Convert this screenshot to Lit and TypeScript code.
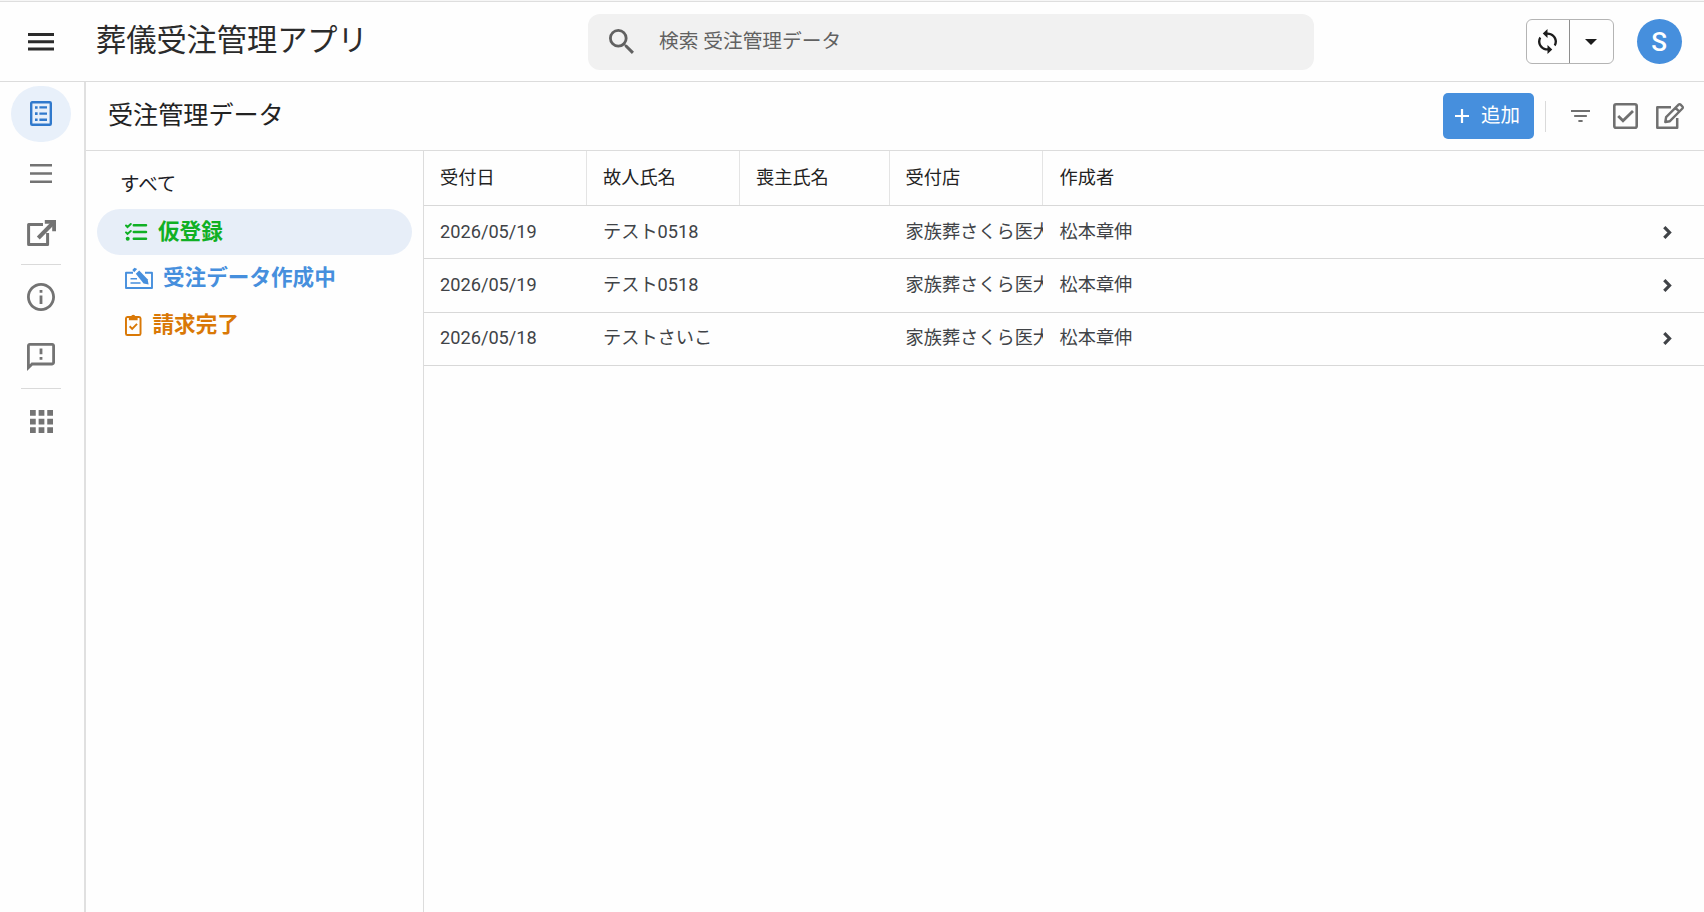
import { LitElement, html, svg, css } from "lit";
import { customElement, property } from "lit/decorators.js";

const icons: Record<string, { vb: string; body: unknown }> = {
  menu: { vb: "0 0 26 18", body: svg`<path d="M0 0h26v3H0zM0 7.2h26v3H0zM0 14.4h26v3H0z"/>` },
  lines: { vb: "0 0 22 19", body: svg`<path d="M0 0h22v2.6H0zM0 8.2h22v2.6H0zM0 16.4h22V19H0z"/>` },
  search: { vb: "3 3 17.5 17.5", body: svg`<path d="M15.5 14h-.79l-.28-.27A6.47 6.47 0 0 0 16 9.5 6.5 6.5 0 1 0 9.5 16c1.61 0 3.09-.59 4.23-1.57l.27.28v.79l5 4.99L20.49 19l-4.99-5zm-6 0C7.01 14 5 11.99 5 9.5S7.01 5 9.5 5 14 7.01 14 9.5 11.99 14 9.5 14z"/>` },
  sync: { vb: "4 1 16 22", body: svg`<path d="M12 4V1L8 5l4 4V6c3.31 0 6 2.69 6 6 0 1.01-.25 1.97-.7 2.8l1.46 1.46A7.93 7.93 0 0 0 20 12c0-4.42-3.58-8-8-8zm0 14c-3.31 0-6-2.69-6-6 0-1.01.25-1.97.7-2.8L5.24 7.74A7.93 7.93 0 0 0 4 12c0 4.42 3.58 8 8 8v3l4-4-4-4v3z"/>` },
  caret: { vb: "0 0 12 6", body: svg`<path d="M0 0h12L6 6z"/>` },
  table: { vb: "0 0 22 25", body: svg`<path fill="none" stroke="currentColor" stroke-width="2.4" d="M2.2 1.2h17.6a1 1 0 0 1 1 1v20.6a1 1 0 0 1-1 1H2.2a1 1 0 0 1-1-1V2.200a1 1 0 0 1 1-1z"/><path d="M5 5.200h2.600v2.600H5zM9.400 5.200H17v2.400H9.400zM5 11.300h2.600v2.600H5zM9.400 11.400H17v2.400H9.400zM5 17.400h2.600V20H5zM9.400 17.500H17v2.400H9.400z"/>` },
  open: { vb: "0 0 29 26", body: svg`<path fill="none" stroke="currentColor" stroke-width="3" stroke-linejoin="round" d="M16 4.400H1.600v20h19V13"/><path fill="none" stroke="currentColor" stroke-width="4" d="M11.300 18 25.500 3.500"/><path d="M17.800 0H29v11.300h-3.800V3.800h-7.400z"/>` },
  info: { vb: "2 2 20 20", body: svg`<path d="M11 7h2v2h-2zm0 4h2v6h-2zm1-9C6.480 2 2 6.480 2 12s4.480 10 10 10 10-4.480 10-10S17.520 2 12 2zm0 18c-4.410 0-8-3.590-8-8s3.590-8 8-8 8 3.590 8 8-3.590 8-8 8z"/>` },
  feedback: { vb: "2 2 20 20", body: svg`<path d="M20 2H4c-1.100 0-1.990.9-1.990 2L2 22l4-4h14c1.100 0 2-.9 2-2V4c0-1.100-.9-2-2-2zm0 14H5.170l-.59.59-.58.58V4h16v12zm-9-4h2v2h-2zm0-6h2v4h-2z"/>` },
  apps: { vb: "4 4 16 16", body: svg`<path d="M4 8h4V4H4zm6 12h4v-4h-4zm-6 0h4v-4H4zm0-6h4v-4H4zm6 0h4v-4h-4zm6-10v4h4V4zm-6 4h4V4h-4zm6 6h4v-4h-4zm0 6h4v-4h-4z"/>` },
  tasks: { vb: "0 0 22 18", body: svg`<path fill="none" stroke="currentColor" stroke-width="2" stroke-linecap="round" d="M1 2.500 2.500 4 5.800 1M1 9.400l1.500 1.500L5.800 8"/><circle cx="2.700" cy="15.800" r="2"/><path fill="none" stroke="currentColor" stroke-width="2.500" stroke-linecap="round" d="M8.800 2.200H21M8.800 9H21M8.800 15.800H21"/>` },
  compose: { vb: "0 0 28 21", body: svg`<path fill="none" stroke="currentColor" stroke-width="1.900" stroke-linejoin="round" d="M8 4.800H1v15.200h26V4.800h-7"/><path fill="none" stroke="currentColor" stroke-width="1.500" d="M5.500 10.800h6.500M5.500 15h10"/><path d="M10.800 5.800 14.200 2.600 22.600 11.200l1 5.200-5-.8z"/><path d="m7.300 1.900 2.200-2.100 2.700 1.300L9.200 4.200z"/>` },
  clipboard: { vb: "0 0 17 22", body: svg`<rect x="1" y="3" width="15" height="18" rx="1.500" fill="none" stroke="currentColor" stroke-width="2"/><path d="M4 6.200V2.500h2.200a2.400 2.400 0 0 1 4.600 0H13v3.700z"/><path fill="none" stroke="currentColor" stroke-width="2" d="m4.800 12.300 2.600 2.600 5-5"/>` },
  plus: { vb: "0 0 14 14", body: svg`<path d="M5.900 0h2.200v5.900H14v2.200H8.100V14H5.900V8.100H0V5.900h5.900z"/>` },
  filter: { vb: "3 6 18 12", body: svg`<path d="M10 18h4v-2h-4v2zM3 6v2h18V6H3zm3 7h12v-2H6v2z"/>` },
  check: { vb: "0 0 25 26", body: svg`<rect x="1.300" y="1.300" width="22.400" height="23.400" rx="1.800" fill="none" stroke="currentColor" stroke-width="2.600"/><path fill="none" stroke="currentColor" stroke-width="2.800" d="m5.200 13 4.800 4.800L20 8"/>` },
  edit: { vb: "0 0 28 26", body: svg`<path fill="none" stroke="currentColor" stroke-width="2.500" stroke-linejoin="round" d="M15 4.200H1.300v20.500h19.900V15"/><path fill="none" stroke="currentColor" stroke-width="2.400" stroke-linejoin="round" d="m9.300 19 .8-4.800L22.600 1.700a1.400 1.400 0 0 1 2 0l1.800 1.800a1.400 1.400 0 0 1 0 2L13.900 18.200z M19.500 4.800l3.800 3.800"/>` },
  chevron: { vb: "0 0 9 13", body: svg`<path fill="none" stroke="currentColor" stroke-width="3.200" d="m1.300 1.200 5.200 5.300-5.200 5.300"/>` },
};

@customElement("ui-icon")
class UiIcon extends LitElement {
  @property() name = "menu";
  @property({ type: Number }) w = 24;
  @property({ type: Number }) h = 24;
  static styles = css`
    :host { display: inline-flex; flex: none; }
    svg { display: block; fill: currentColor; overflow: visible; }
  `;
  render() {
    const i = icons[this.name];
    return html`<svg width=${this.w} height=${this.h} viewBox=${i.vb} preserveAspectRatio="none">${i.body}</svg>`;
  }
}

const rows = [
  ["2026/05/19", "テスト0518", "", "家族葬さくら医大", "松本章伸"],
  ["2026/05/19", "テスト0518", "", "家族葬さくら医大", "松本章伸"],
  ["2026/05/18", "テストさいこ", "", "家族葬さくら医大", "松本章伸"],
];
const columns = ["受付日", "故人氏名", "喪主氏名", "受付店", "作成者"];

@customElement("app-root")
class AppRoot extends LitElement {
  static styles = css`
    :host {
      display: flex; flex-direction: column; height: 100vh; overflow: hidden;
      background: #fefefe; color: #27292c; box-sizing: border-box;
      font: 18.2px/1 Roboto, "Noto Sans CJK JP", sans-serif;
      border-top: 1px solid #f6f6f6;
    }
    * { box-sizing: border-box; }
    header {
      display: flex; align-items: center; height: 81px; flex: none;
      border-top: 1px solid #dedede; border-bottom: 1px solid #dcdcdc;
      padding: 0 22.500px 0 28px; color: #2b2b2b;
    }
    h1 { margin: 0 0 0 42px; width: 492px; font-size: 30.200px; font-weight: 400; line-height: 40px; white-space: nowrap; padding-bottom: 1px; }
    .search {
      display: flex; align-items: center; width: 726px; height: 56px; gap: 25px;
      padding-left: 21px; border-radius: 12px; background: #f1f1f1; color: #616161;
      font-size: 19.700px; line-height: 28px;
    }
    .sync { display: flex; width: 88px; height: 45px; margin-left: auto; border: 1px solid #b4b4b4; border-radius: 6px; color: #1c1c1c; }
    .sync span { flex: 1; display: grid; place-items: center; }
    .sync span + span { border-left: 1px solid #8e8e8e; }
    .avatar { display: grid; place-items: center; width: 45px; height: 45px; margin-left: 23px; border-radius: 50%; background: #468fdd; color: #fff; font-size: 26px; font-weight: 500; }
    .body { display: flex; flex: 1; min-height: 0; }
    .rail { display: flex; flex-direction: column; align-items: center; width: 86px; border-right: 2px solid #e0e0e0; padding: 4px 2px 0 0; color: #737373; }
    .slot { display: grid; place-items: center; width: 60px; height: 59.400px; flex: none; }
    .slot.on { height: 56px; margin-bottom: 2px; padding-bottom: 2px; border-radius: 28px; background: #e8f0fa; color: #3079cc; }
    .rail hr { width: 40px; height: 1px; border: 0; margin: 1px 0 3px; background: #dadada; flex: none; }
    main { flex: 1; display: flex; flex-direction: column; min-width: 0; }
    .bar { display: flex; align-items: center; height: 69px; flex: none; border-bottom: 1px solid #dcdcdc; padding: 0 20px 0 22px; color: #707070; }
    h2 { margin: 0 auto 0 0; font-size: 25.100px; font-weight: 400; line-height: 34px; padding-bottom: 1px; color: #222; }
    .add { display: flex; align-items: center; width: 91px; height: 46px; padding-left: 12px; gap: 12px; border-radius: 5px; background: #468fdd; color: #fff; font-size: 19.500px; line-height: 28px; }
    .sep { width: 1px; height: 31px; margin: 0 25px 0 11px; background: #dadada; }
    .content { display: flex; flex: 1; min-height: 0; }
    nav { width: 337px; padding: 11px 11px 0 11px; color: #1c2026; flex: none; }
    .item { display: flex; align-items: center; height: 46.500px; padding-left: 28px; border-radius: 23px; font-size: 21.600px; line-height: 32px; font-weight: 700; white-space: nowrap; }
    .all { font-size: 19.500px; font-weight: 400; padding-left: 23px; line-height: 26px; }
    .green { background: #e7eef8; color: #10b024; gap: 11px; }
    .blue { color: #468fdd; gap: 10px; }
    .orange { color: #d97806; gap: 11px; }
    .table { flex: 1; border-left: 1px solid #dcdcdc; min-width: 0; }
    .row { display: grid; grid-template-columns: 163px 153px 149.500px 153px 1fr 41px; height: 53.330px; border-bottom: 1px solid #d8d8d8; align-items: center; color: #404347; }
    .head { height: 55px; color: #222; }
    .cell { padding: 0 0 1px 16px; overflow: hidden; white-space: nowrap; line-height: 28px; }
    .cell:nth-child(5) { padding-left: 17px; }
    .head .cell { height: 54px; line-height: 53px; border-right: 1px solid #e4e4e4; }
    .head .cell:nth-child(5) { border: 0; }
    .check { margin-left: 23px; }
    .edit { margin-left: 18px; }
  `;
  render() {
    return html`
      <header>
        <ui-icon name="menu" w="26" h="18"></ui-icon>
        <h1>葬儀受注管理アプリ</h1>
        <div class="search"><ui-icon name="search" w="25" h="25"></ui-icon><span>検索 受注管理データ</span></div>
        <div class="sync">
          <span><ui-icon name="sync" w="19" h="25"></ui-icon></span>
          <span><ui-icon name="caret" w="12" h="6"></ui-icon></span>
        </div>
        <div class="avatar">S</div>
      </header>
      <div class="body">
        <div class="rail">
          <div class="slot on"><ui-icon name="table" w="22" h="25"></ui-icon></div>
          <div class="slot"><ui-icon name="lines" w="22" h="19"></ui-icon></div>
          <div class="slot"><ui-icon name="open" w="29" h="26"></ui-icon></div>
          <hr />
          <div class="slot"><ui-icon name="info" w="28" h="28"></ui-icon></div>
          <div class="slot"><ui-icon name="feedback" w="28" h="28"></ui-icon></div>
          <hr />
          <div class="slot"><ui-icon name="apps" w="23" h="23"></ui-icon></div>
        </div>
        <main>
          <div class="bar">
            <h2>受注管理データ</h2>
            <div class="add"><ui-icon name="plus" w="14" h="14"></ui-icon><span>追加</span></div>
            <div class="sep"></div>
            <ui-icon name="filter" w="19" h="12"></ui-icon>
            <ui-icon class="check" name="check" w="25" h="26"></ui-icon>
            <ui-icon class="edit" name="edit" w="28" h="26"></ui-icon>
          </div>
          <div class="content">
            <nav>
              <div class="item all">すべて</div>
              <div class="item green"><ui-icon name="tasks" w="22" h="18"></ui-icon>仮登録</div>
              <div class="item blue"><ui-icon name="compose" w="28" h="21"></ui-icon>受注データ作成中</div>
              <div class="item orange"><ui-icon name="clipboard" w="16.500" h="22"></ui-icon>請求完了</div>
            </nav>
            <div class="table">
              <div class="row head">${columns.map((c) => html`<div class="cell">${c}</div>`)}</div>
              ${rows.map(
                (r) => html`<div class="row">
                  ${r.map((c) => html`<div class="cell">${c}</div>`)}
                  <ui-icon name="chevron" w="9" h="13"></ui-icon>
                </div>`
              )}
            </div>
          </div>
        </main>
      </div>
    `;
  }
}
